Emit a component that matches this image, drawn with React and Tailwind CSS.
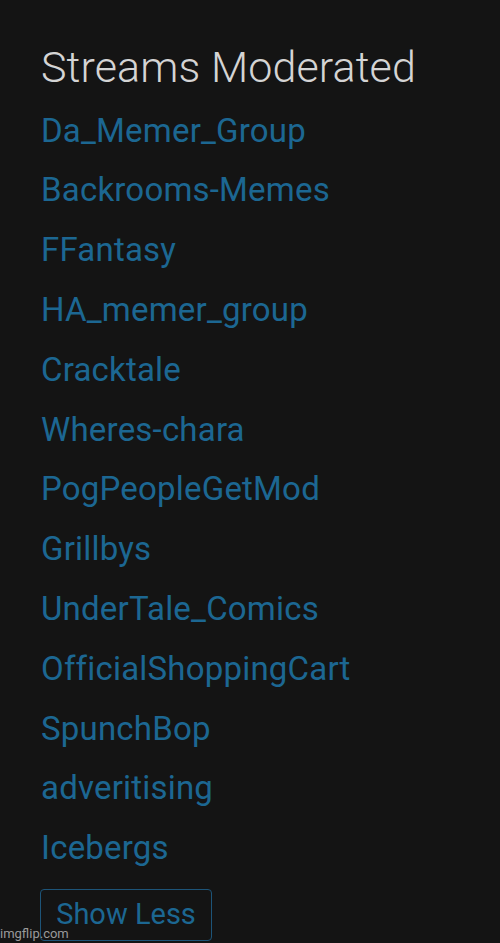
export default function App() {
  const items = [
    "Da_Memer_Group",
    "Backrooms-Memes",
    "FFantasy",
    "HA_memer_group",
    "Cracktale",
    "Wheres-chara",
    "PogPeopleGetMod",
    "Grillbys",
    "UnderTale_Comics",
    "OfficialShoppingCart",
    "SpunchBop",
    "adveritising",
    "Icebergs",
  ];
  return (
    <div className="relative w-[500px] h-[943px] overflow-hidden bg-[#141414] font-['Roboto',sans-serif]">
      <div className="pl-[41px] pt-[43px]">
        <h2 className="text-[43px] leading-[48px] font-light tracking-[0.1px] text-[#d4d4d4]">Streams Moderated</h2>
        <ul className="mt-[9.5px] flex flex-col">
          {items.map((it) => (
            <li key={it} className="h-[59.8px] flex items-center text-[33px] tracking-[0.2px] text-[#1c6792]">
              {it}
            </li>
          ))}
        </ul>
        <button className="mt-[11px] h-[52px] w-[172px] -ml-px rounded-[4px] border border-[#1d5478] text-[29px] text-[#1c6792]">
          Show Less
        </button>
      </div>
      <div className="absolute left-0 bottom-[3px] text-[13px] leading-none text-[#9a9a9a] font-['Roboto',sans-serif]">imgflip.com</div>
    </div>
  );
}
